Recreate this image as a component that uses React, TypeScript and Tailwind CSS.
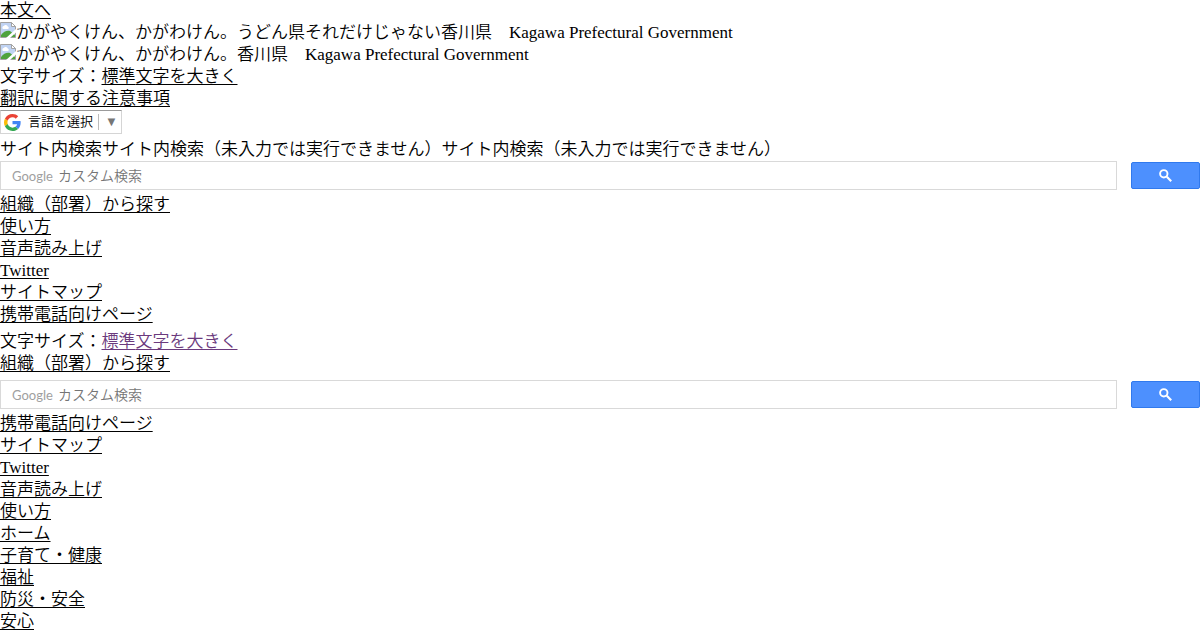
import type { ReactNode } from "react";

type NavItem = { label: string; href: string };

const UTILITY_LINKS: NavItem[] = [
  { label: "組織（部署）から探す", href: "#soshiki" },
  { label: "使い方", href: "#guide" },
  { label: "音声読み上げ", href: "#voice" },
  { label: "Twitter", href: "#twitter" },
  { label: "サイトマップ", href: "#sitemap" },
  { label: "携帯電話向けページ", href: "#mobile" },
];

const MENU_LINKS: NavItem[] = [
  { label: "携帯電話向けページ", href: "#mobile" },
  { label: "サイトマップ", href: "#sitemap" },
  { label: "Twitter", href: "#twitter" },
  { label: "音声読み上げ", href: "#voice" },
  { label: "使い方", href: "#guide" },
  { label: "ホーム", href: "#home" },
  { label: "子育て・健康", href: "#kosodate" },
  { label: "福祉", href: "#fukushi" },
  { label: "防災・安全", href: "#bosai" },
  { label: "安心", href: "#anshin" },
];

function TextLink({ href, visited, children }: { href: string; visited?: boolean; children: ReactNode }) {
  return (
    <a
      href={href}
      className={`underline decoration-1 underline-offset-2 [text-decoration-skip-ink:none] ${visited ? "text-[#6b3a7d]" : "text-black"}`}
    >
      {children}
    </a>
  );
}

function LinkList({ items }: { items: NavItem[] }) {
  return (
    <ul>
      {items.map((item) => (
        <li key={item.label} className="h-[22px]">
          <TextLink href={item.href}>{item.label}</TextLink>
        </li>
      ))}
    </ul>
  );
}

function MissingImage({ alt }: { alt: string }) {
  return (
    <p className="flex h-[22px] items-start">
      <svg width="16" height="16" viewBox="0 0 16 16" className="shrink-0" aria-hidden="true">
        <path d="M.5.5h11l4 4v11H.5z" fill="#c0d3f3" stroke="#a3a3a3" />
        <path d="M11.5.5v4h4z" fill="#fff" stroke="#a3a3a3" />
        <path d="M3 7a1.600 1.600 0 0 1 .8-2.900 2.200 2.200 0 0 1 4 .3A1.400 1.400 0 0 1 8 7z" fill="#fff" />
        <path d="M1 15v-2C3.500 9.500 7 8 10 9l5 4v2z" fill="#4fa33d" />
        <path d="M6 16 16 7v3.500L10 16z" fill="#fff" />
      </svg>
      <span>{alt}</span>
    </p>
  );
}

function FontSize({ visited }: { visited?: boolean }) {
  return (
    <p className="h-[22px]">
      文字サイズ：
      <TextLink href="#font-normal" visited={visited}>標準</TextLink>
      <TextLink href="#font-large" visited={visited}>文字を大きく</TextLink>
    </p>
  );
}

function GoogleMark() {
  return (
    <svg width="17" height="17" viewBox="0 0 48 48" className="shrink-0" aria-hidden="true">
      <path fill="#EA4335" d="M24 9.500c3.540 0 6.710 1.220 9.210 3.600l6.850-6.850C35.900 2.380 30.470 0 24 0 14.620 0 6.510 5.380 2.560 13.220l7.980 6.190C12.430 13.720 17.740 9.500 24 9.500z" />
      <path fill="#4285F4" d="M46.980 24.550c0-1.570-.15-3.090-.38-4.550H24v9.020h12.940c-.58 2.960-2.260 5.480-4.780 7.180l7.730 6c4.510-4.180 7.090-10.360 7.090-17.650z" />
      <path fill="#FBBC05" d="M10.530 28.590c-.48-1.450-.76-2.990-.76-4.590s.27-3.140.76-4.590l-7.980-6.190C.92 16.460 0 20.120 0 24c0 3.880.92 7.540 2.560 10.780l7.970-6.190z" />
      <path fill="#34A853" d="M24 48c6.480 0 11.930-2.130 15.890-5.810l-7.730-6c-2.150 1.450-4.920 2.300-8.160 2.300-6.260 0-11.570-4.220-13.470-9.910l-7.980 6.190C6.510 42.620 14.620 48 24 48z" />
    </svg>
  );
}

function TranslateSelect() {
  return (
    <div className="flex h-6 w-[122px] items-center border border-[#d5d5d5] border-t-[#9b9b9b] pl-[3px] font-['Liberation_Sans','Noto_Sans_CJK_JP',sans-serif] text-[13px]">
      <GoogleMark />
      <select
        aria-label="言語"
        className="ml-[7px] w-[68px] shrink-0 appearance-none bg-white leading-5 text-black"
      >
        <option>言語を選択</option>
        <option>English</option>
      </select>
      <span aria-hidden="true" className="ml-0.5 h-4 border-l border-[#bbb] pl-1.5 leading-4 text-[#767676]">▼</span>
    </div>
  );
}

function SearchBox({ id }: { id: string }) {
  return (
    <form className="flex items-center gap-3.5" onSubmit={(e) => e.preventDefault()}>
      <div className="relative min-w-0 flex-1">
        <input
          id={id}
          type="text"
          aria-label="カスタム検索"
          placeholder="カスタム検索"
          className="peer block h-[29px] w-full border border-[#d9d9d9] pl-[57px] font-['Liberation_Sans','Noto_Sans_CJK_JP',sans-serif] text-[14px] placeholder:text-[#757575]"
        />
        <span
          aria-hidden="true"
          className="pointer-events-none absolute inset-y-0 left-3 hidden items-center font-['Lato',sans-serif] text-[13px] font-normal text-[#a0a0a0] peer-placeholder-shown:flex"
        >
          Google
        </span>
      </div>
      <button
        type="submit"
        aria-label="検索"
        className="flex h-[27px] w-[69px] items-center justify-center rounded-xs border border-[#3079ed] bg-[#4d90fe]"
      >
        <svg width="13" height="13" viewBox="0 0 13 13" fill="none" stroke="#fff" aria-hidden="true">
          <circle cx="4.800" cy="4.800" r="3.700" strokeWidth="1.900" />
          <path d="M7.800 7.800 12.200 12.200" strokeWidth="2.200" />
        </svg>
      </button>
    </form>
  );
}

export default function App() {
  return (
    <div className="bg-white font-['Liberation_Serif','Noto_Sans_CJK_JP',serif] text-[17px] leading-[22px] font-[350] text-black">
      <header>
        <p className="h-[22px]">
          <TextLink href="#main">本文へ</TextLink>
        </p>
        <MissingImage alt="かがやくけん、かがわけん。うどん県それだけじゃない香川県　Kagawa Prefectural Government" />
        <MissingImage alt="かがやくけん、かがわけん。香川県　Kagawa Prefectural Government" />
        <FontSize />
        <p className="h-[22px]">
          <TextLink href="#translation">翻訳に関する注意事項</TextLink>
        </p>
        <TranslateSelect />
        <label htmlFor="search-top" className="block pt-[5px]">
          サイト内検索サイト内検索（未入力では実行できません）サイト内検索（未入力では実行できません）
        </label>
        <SearchBox id="search-top" />
      </header>

      <nav className="mt-1" aria-label="ユーティリティ">
        <LinkList items={UTILITY_LINKS} />
      </nav>

      <nav className="mt-[5px]" aria-label="メニュー">
        <FontSize visited />
        <p className="mb-[5px] h-[22px]">
          <TextLink href="#soshiki">組織（部署）から探す</TextLink>
        </p>
        <SearchBox id="search-menu" />
        <div className="mt-1">
          <LinkList items={MENU_LINKS} />
        </div>
      </nav>
    </div>
  );
}
